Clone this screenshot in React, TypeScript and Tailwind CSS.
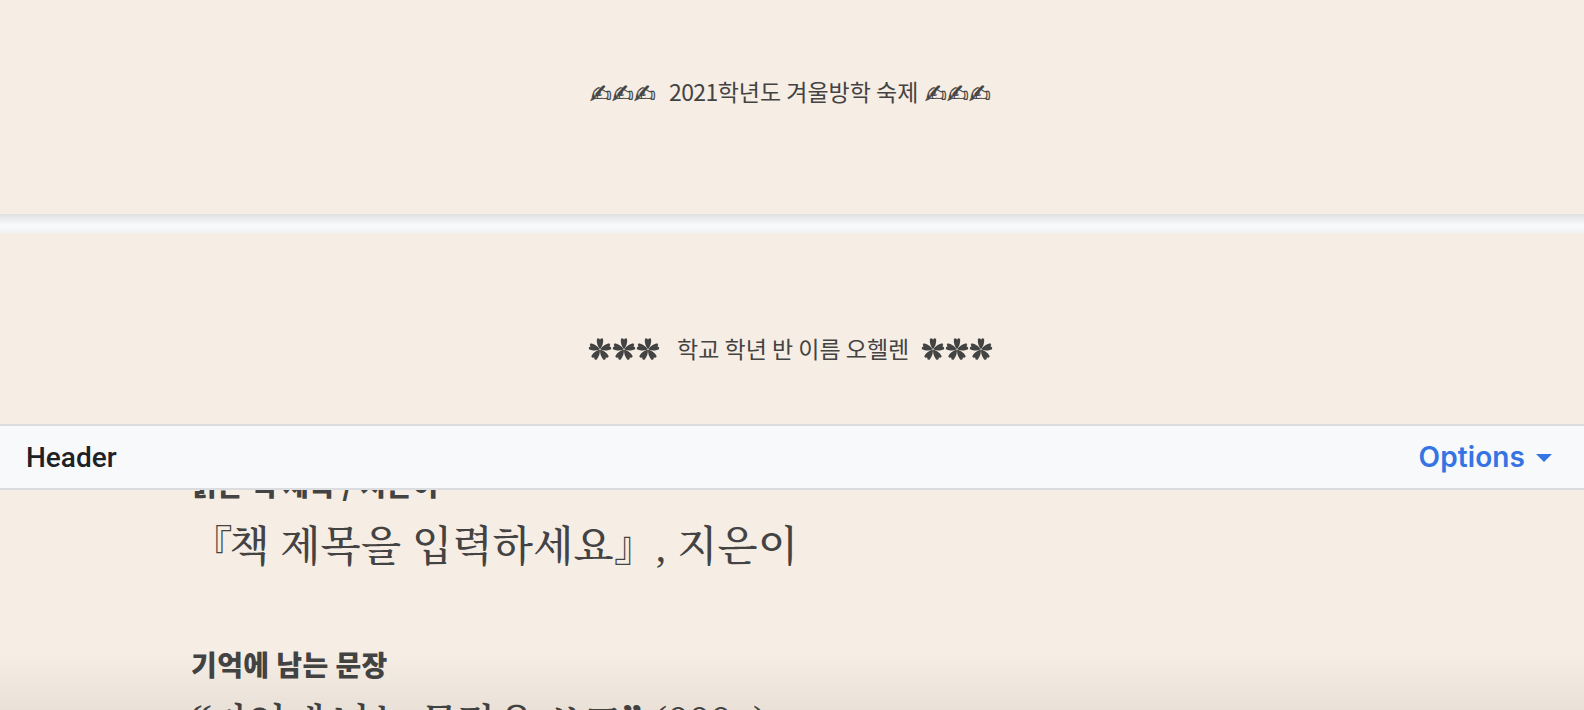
const PETAL_ANGLES = [0, 72, 144, 216, 288]

const sans = "font-['Noto_Sans_CJK_KR','Liberation_Sans',sans-serif]"
const serif = "font-['Liberation_Serif','Noto_Serif_CJK_KR','Noto_Sans_CJK_KR',serif]"

function Flower() {
  return (
    <svg viewBox="0 0 24 24" className="h-6 w-6 shrink-0" fill="currentColor">
      {PETAL_ANGLES.map((a) => (
        <path
          key={a}
          transform={`rotate(${a} 12 12.5)`}
          d="M11.8 12 C10 9.8 8.3 6.5 8.9 1.8 L10.7 1.3 L12 2.5 L13.3 1.3 L15.1 1.8 C15.7 6.5 14 9.8 12.2 12 Z"
        />
      ))}
    </svg>
  )
}

function Flowers() {
  return (
    <span className="flex">
      <Flower />
      <Flower />
      <Flower />
    </span>
  )
}

function Hands() {
  return (
    <span className="font-['DejaVu_Sans',sans-serif] text-[26px] leading-[30px] tracking-[0.2px] [-webkit-text-stroke:0.4px_#434343]">
      ✍✍✍
    </span>
  )
}

export default function App() {
  return (
    <div className="relative flex h-[710px] w-[1584px] flex-col overflow-hidden bg-[#f6ede4] text-[#434343]">
      {/* Page footer */}
      <section className={`${sans} flex h-[214px] shrink-0 items-start pt-[76px] pl-[590px] text-[23px] leading-[30px]`}>
        <div className="mt-[2px] w-[79px]"><Hands /></div>
        <span className="w-[256px] whitespace-nowrap">
          <span className="tracking-[-0.6px]">2021</span>학년도 겨울방학 숙제
        </span>
        <div className="mt-[2px]"><Hands /></div>
      </section>

      {/* Gap between pages */}
      <div className="h-[19px] shrink-0 bg-linear-to-b from-[#dfe1e3] via-[#f8fafc] via-60% to-[#f1f2f2]" />

      {/* Page header */}
      <section className={`${sans} flex h-[191px] shrink-0 items-start pt-[100px] pl-[588px] text-[23px] leading-[30px]`}>
        <div className="mt-[4px] w-[89px]"><Flowers /></div>
        <span className="w-[244px] whitespace-nowrap">학교 학년 반 이름 오헬렌</span>
        <div className="mt-[4px]"><Flowers /></div>
      </section>

      {/* Header toolbar */}
      <div className="z-10 flex h-[66px] shrink-0 items-center justify-between border-y-2 border-[#dadce0] bg-[#f8f9fb] pr-8 pl-[26px]">
        <span className="pt-[2px] font-['Roboto',sans-serif] text-[28px] font-medium text-[#202124]">Header</span>
        <button className="flex items-center gap-[11px] font-['Inter',sans-serif] text-[28px] font-semibold tracking-[0.1px] text-[#3574e2]">
          Options
          <svg viewBox="0 0 16 8" className="mt-px h-2 w-4" fill="currentColor">
            <path d="M0 0h16L8 8z" />
          </svg>
        </button>
      </div>

      {/* Body */}
      <main className="-mt-[24px] flex flex-col pl-[191px] whitespace-nowrap">
        <h2 className={`${sans} h-[36px] text-[28px] leading-[36px] font-black tracking-[0.4px]`}>읽은 책 제목 / 지은이</h2>
        <p className={`${serif} mt-[15px] h-[60px] text-[41.5px] leading-[60px] font-medium tracking-[0.1px]`}>
          <span className="tracking-[-3px]">『</span>책 <span className="tracking-[0.3px]">제목을 입력하세요』, 지은이</span>
        </p>
        <h2 className={`${sans} mt-[69px] h-[36px] text-[28px] leading-[36px] font-black tracking-[0.4px]`}>기억에 남는 문장</h2>
        <p className={`${serif} mt-[13px] h-[60px] text-[41.5px] leading-[60px] font-medium`}>
          <span className="align-[6px] leading-none font-bold tracking-[-4px]">“</span>
          <span className="tracking-[-1.4px]">기억에 남는 문장을 쓰고</span>
          <span className="align-[6px] leading-none font-bold">”</span>
          <span className="align-[4px] leading-none tracking-[0.6px]"> (000p)</span>
        </p>
      </main>

      <div className="absolute inset-x-0 bottom-0 h-[58px] bg-linear-to-b from-transparent to-[#202010]/6" />
    </div>
  )
}
